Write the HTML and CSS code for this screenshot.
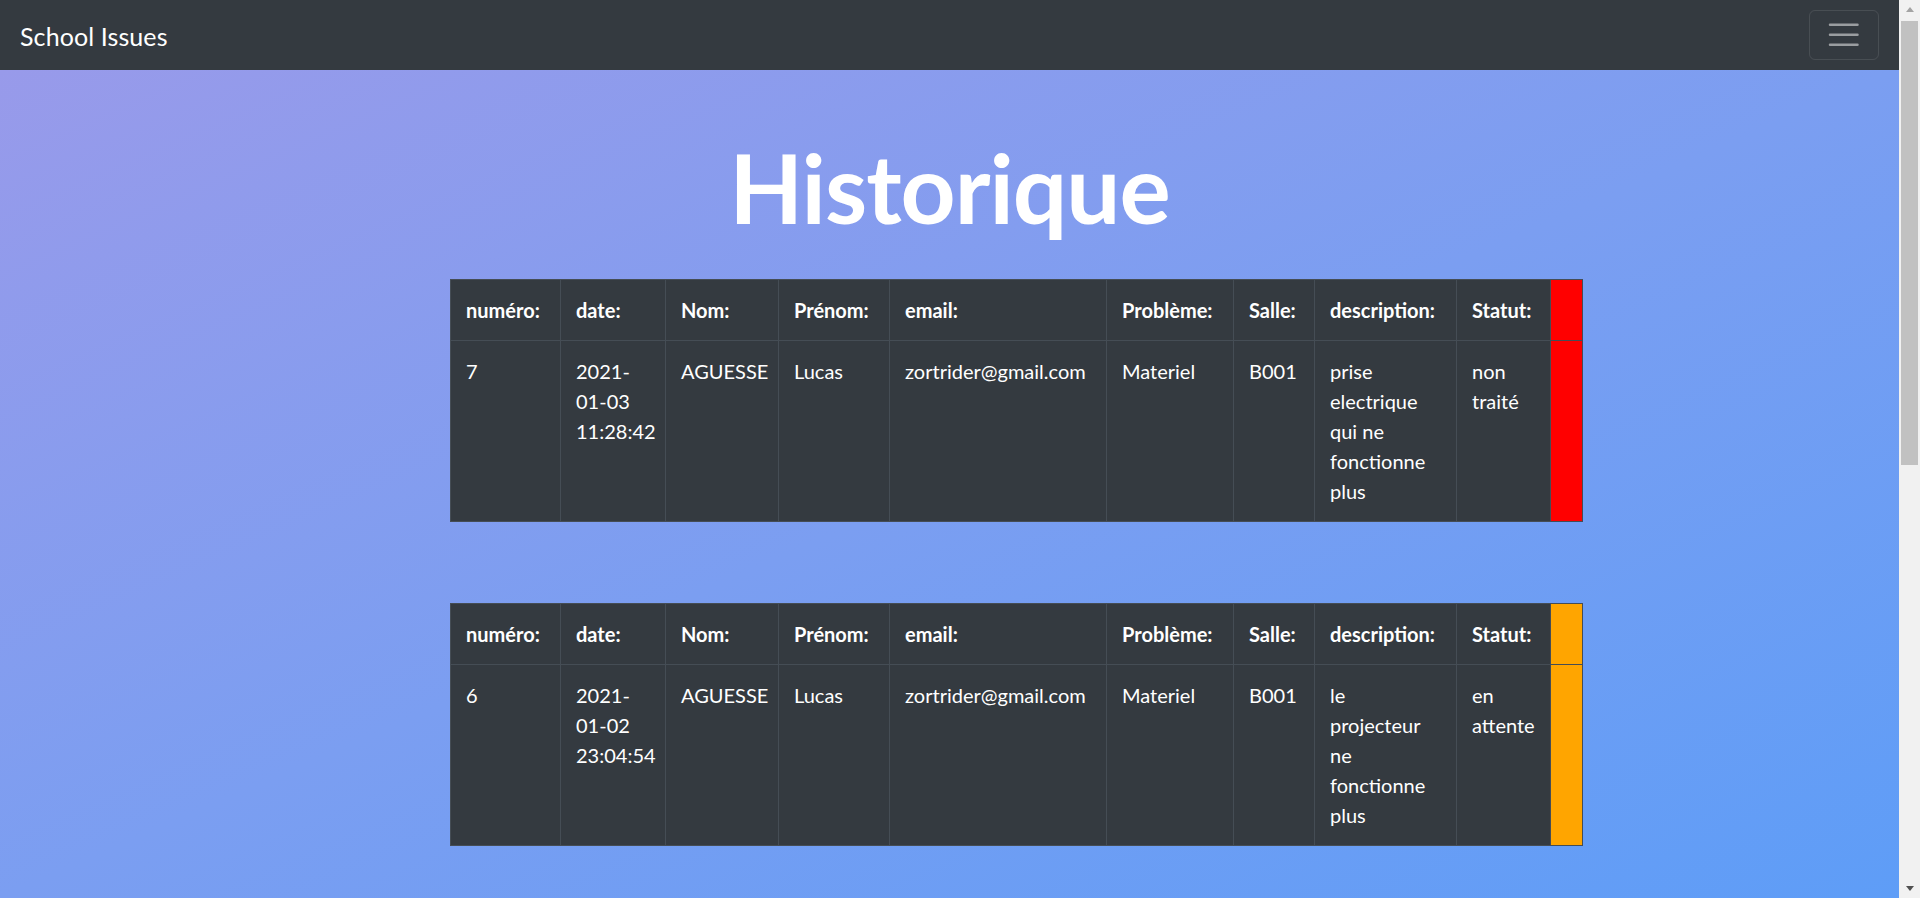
FILE: index.html
```html
<!DOCTYPE html>
<html lang="fr">
<head>
<meta charset="utf-8">
<title>Historique</title>
<link rel="stylesheet" href="styles.css">
</head>
<body>
<div class="app">
  <div class="page">
    <nav class="navbar">
      <a class="brand" href="#">School Issues</a>
      <button class="toggler" type="button" aria-label="Toggle navigation">
        <svg class="toggler-icon" viewBox="0 0 30 30" width="37.5" height="37.5"><path d="M4 7h22M4 15h22M4 23h22" stroke="rgba(255,255,255,0.5)" stroke-width="2" stroke-linecap="round" stroke-miterlimit="10" fill="none"/></svg>
      </button>
    </nav>
    <main class="content">
      <h1 class="title">Historique</h1>
      <div class="tables">
        <table class="issue">
          <colgroup>
            <col class="c-num"><col class="c-date"><col class="c-nom"><col class="c-prenom"><col class="c-email"><col class="c-prob"><col class="c-salle"><col class="c-desc"><col class="c-statut"><col class="c-flag">
          </colgroup>
          <tr>
            <th>numéro:</th><th>date:</th><th>Nom:</th><th>Prénom:</th><th>email:</th><th>Problème:</th><th>Salle:</th><th>description:</th><th>Statut:</th><th class="flag red"></th>
          </tr>
          <tr>
            <td>7</td><td>2021-01-03 11:28:42</td><td>AGUESSE</td><td>Lucas</td><td>zortrider@gmail.com</td><td>Materiel</td><td>B001</td><td class="desc">prise electrique qui ne fonctionne plus</td><td>non traité</td><td class="flag red"></td>
          </tr>
        </table>
        <table class="issue">
          <colgroup>
            <col class="c-num"><col class="c-date"><col class="c-nom"><col class="c-prenom"><col class="c-email"><col class="c-prob"><col class="c-salle"><col class="c-desc"><col class="c-statut"><col class="c-flag">
          </colgroup>
          <tr>
            <th>numéro:</th><th>date:</th><th>Nom:</th><th>Prénom:</th><th>email:</th><th>Problème:</th><th>Salle:</th><th>description:</th><th>Statut:</th><th class="flag orange"></th>
          </tr>
          <tr>
            <td>6</td><td>2021-01-02 23:04:54</td><td>AGUESSE</td><td>Lucas</td><td>zortrider@gmail.com</td><td>Materiel</td><td>B001</td><td class="desc">le projecteur ne fonctionne plus</td><td>en attente</td><td class="flag orange"></td>
          </tr>
        </table>
      </div>
    </main>
  </div>
  <div class="scrollbar" aria-hidden="true">
    <div class="sb-btn"><span class="arrow-up"></span></div>
    <div class="sb-track"><div class="sb-thumb"></div></div>
    <div class="sb-btn"><span class="arrow-down"></span></div>
  </div>
</div>
</body>
</html>
```

FILE: styles.css
```css
html, body {
  margin: 0;
  padding: 0;
  height: 100%;
  overflow: hidden;
}

body {
  font-family: "Lato", "Noto Sans", sans-serif;
  font-size: 20px;
  line-height: 30px;
  color: #fff;
}

.app {
  display: flex;
  height: 100vh;
}

.page {
  flex: 1;
  display: flex;
  flex-direction: column;
  min-width: 0;
}

.navbar {
  height: 70px;
  flex: none;
  box-sizing: border-box;
  background: #343a40;
  display: flex;
  align-items: center;
  justify-content: space-between;
  padding: 0 20px 0 20px;
}

.brand {
  color: #fff;
  text-decoration: none;
  font-size: 25px;
  line-height: 37px;
  padding-top: 2px;
  letter-spacing: 0.1px;
}

.toggler {
  width: 70px;
  height: 50px;
  box-sizing: border-box;
  border: 1px solid rgba(255, 255, 255, 0.1);
  border-radius: 6px;
  background: transparent;
  padding: 0;
  display: flex;
  align-items: center;
  justify-content: center;
}

.toggler-icon {
  display: block;
}

.content {
  flex: 1;
  background: linear-gradient(to bottom right, #989aea 0%, #7b9ef1 50%, #5e9df7 100%);
  overflow: hidden;
}

.title {
  margin: 59px 0 35px;
  text-align: center;
  font-size: 96px;
  line-height: 115px;
  font-weight: 700;
  letter-spacing: -1px;
}

.tables {
  display: flex;
  flex-direction: column;
  gap: 81px;
  padding-left: 450px;
}

.issue {
  table-layout: fixed;
  width: 1132px;
  border-collapse: collapse;
  background: #343a40;
  color: #fff;
}

.issue th,
.issue td {
  border: 1px solid #454d55;
  padding: 15px;
  text-align: left;
  vertical-align: top;
  line-height: 30px;
}

.issue th {
  font-weight: 700;
}

.issue td {
  font-weight: 400;
}

.issue td.desc {
  padding-right: 24px;
}

.c-num { width: 110px; }
.c-date { width: 105px; }
.c-nom { width: 113px; }
.c-prenom { width: 111px; }
.c-email { width: 217px; }
.c-prob { width: 127px; }
.c-salle { width: 81px; }
.c-desc { width: 142px; }
.c-statut { width: 94px; }
.c-flag { width: 32px; }

.issue .flag {
  padding: 0;
}

.red { background: #ff0000; }
.orange { background: #ffa500; }

.tables .issue tr:first-child th {
  height: 30px;
}

.tables .issue tr:last-child td {
  height: 150px;
}

.scrollbar {
  width: 21px;
  flex: none;
  background: #f1f1f1;
  display: flex;
  flex-direction: column;
}

.sb-btn {
  height: 21px;
  flex: none;
  display: flex;
  align-items: center;
  justify-content: center;
}

.arrow-up {
  width: 0;
  height: 0;
  border-left: 4.5px solid transparent;
  border-right: 4.5px solid transparent;
  border-bottom: 5px solid #a3a3a3;
  margin-top: -2px;
}

.arrow-down {
  width: 0;
  height: 0;
  border-left: 4.5px solid transparent;
  border-right: 4.5px solid transparent;
  border-top: 5px solid #505050;
  margin-top: 2px;
}

.sb-track {
  flex: 1;
  padding: 0 2px;
}

.sb-thumb {
  height: 444px;
  background: #c1c1c1;
}
```
